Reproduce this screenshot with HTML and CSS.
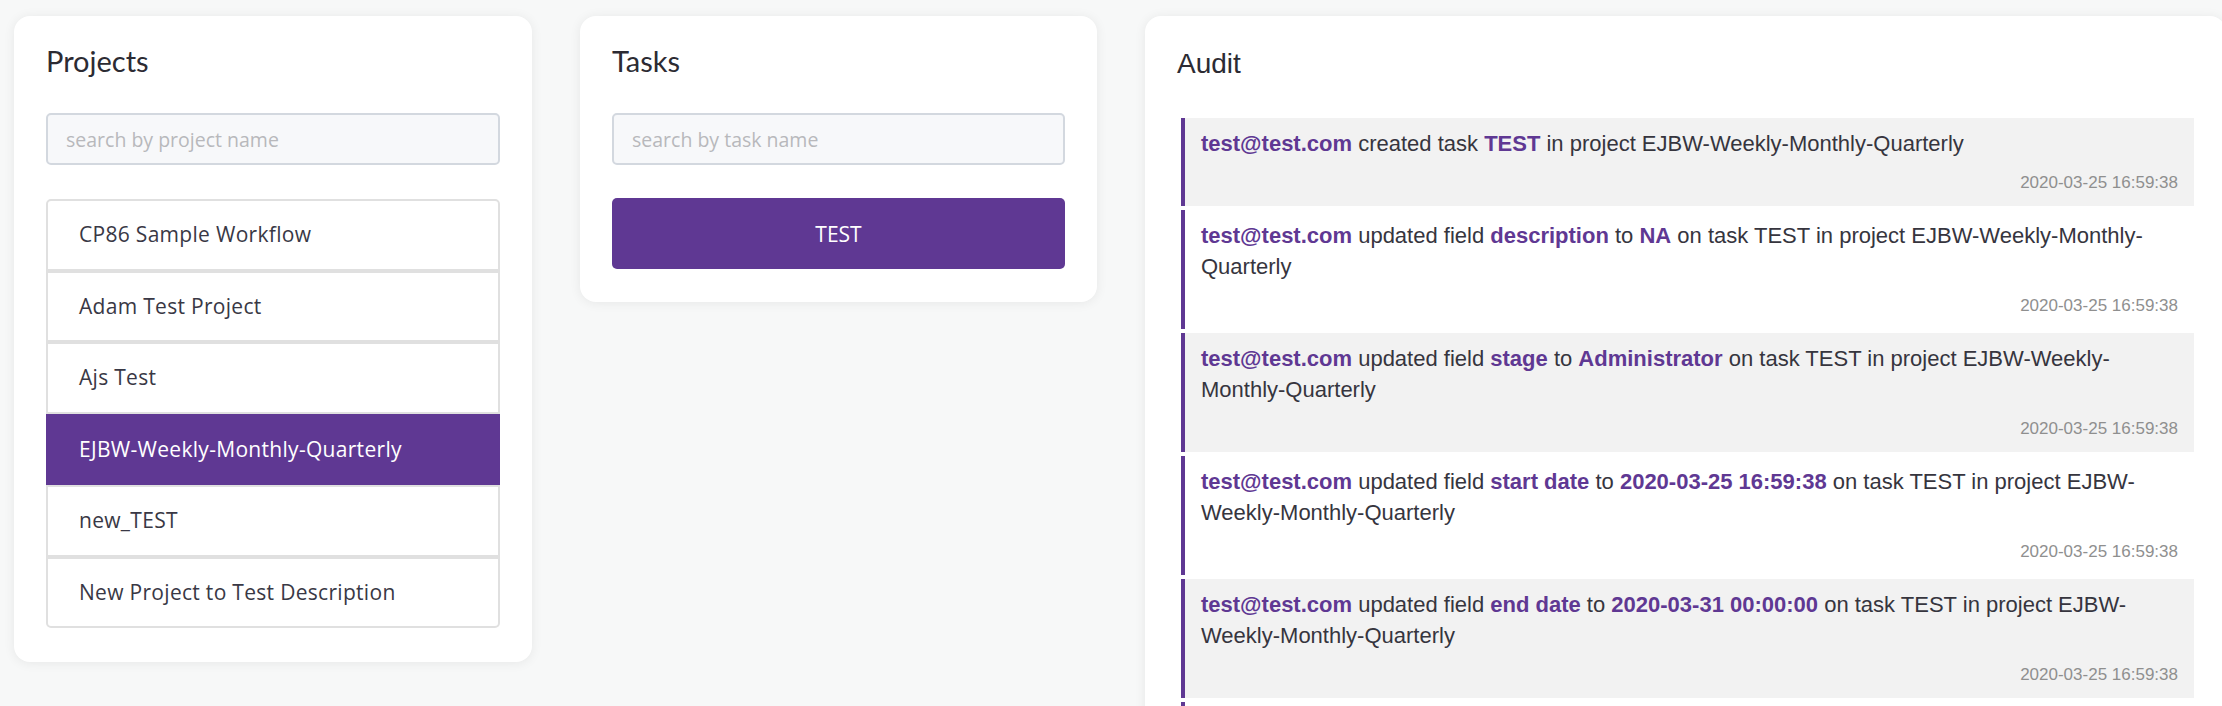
FILE: index.html
```html
<!DOCTYPE html>
<html lang="en">
<head>
<meta charset="utf-8">
<title>Projects</title>
<link rel="stylesheet" href="styles.css">
</head>
<body>
<div class="page">
  <section class="card projects">
    <h2 class="card-title">Projects</h2>
    <input class="search" type="text" placeholder="search by project name">
    <ul class="list">
      <li class="list-item">CP86 Sample Workflow</li>
      <li class="list-item">Adam Test Project</li>
      <li class="list-item">Ajs Test</li>
      <li class="list-item active">EJBW-Weekly-Monthly-Quarterly</li>
      <li class="list-item">new_TEST</li>
      <li class="list-item">New Project to Test Description</li>
    </ul>
  </section>

  <section class="card tasks">
    <h2 class="card-title">Tasks</h2>
    <input class="search" type="text" placeholder="search by task name">
    <button class="task-btn" type="button">TEST</button>
  </section>

  <section class="card audit">
    <h2 class="card-title audit-title">Audit</h2>
    <div class="entries">
      <div class="entry">
        <p class="msg"><b>test@test.com</b> created task <b>TEST</b> in project EJBW-Weekly-Monthly-Quarterly</p>
        <div class="time">2020-03-25 16:59:38</div>
      </div>
      <div class="entry">
        <p class="msg"><b>test@test.com</b> updated field <b>description</b> to <b>NA</b> on task TEST in project EJBW-Weekly-Monthly-Quarterly</p>
        <div class="time">2020-03-25 16:59:38</div>
      </div>
      <div class="entry">
        <p class="msg"><b>test@test.com</b> updated field <b>stage</b> to <b>Administrator</b> on task TEST in project EJBW-Weekly-Monthly-Quarterly</p>
        <div class="time">2020-03-25 16:59:38</div>
      </div>
      <div class="entry">
        <p class="msg"><b>test@test.com</b> updated field <b>start date</b> to <b>2020-03-25 16:59:38</b> on task TEST in project EJBW-Weekly-Monthly-Quarterly</p>
        <div class="time">2020-03-25 16:59:38</div>
      </div>
      <div class="entry">
        <p class="msg"><b>test@test.com</b> updated field <b>end date</b> to <b>2020-03-31 00:00:00</b> on task TEST in project EJBW-Weekly-Monthly-Quarterly</p>
        <div class="time">2020-03-25 16:59:38</div>
      </div>
      <div class="entry entry-more"></div>
    </div>
  </section>
</div>
</body>
</html>
```

FILE: styles.css
```css
html, body {
  margin: 0;
  padding: 0;
  overflow: hidden;
  background: #f7f8f8;
}

body {
  font-family: "Open Sans", Lato, sans-serif;
  color: #383744;
}

.page {
  display: flex;
  align-items: flex-start;
  gap: 48px;
  padding: 16px 0 0 14px;
}

.card {
  flex-shrink: 0;
  box-sizing: border-box;
  background: #ffffff;
  border-radius: 16px;
  box-shadow: 0 1px 12px rgba(0, 0, 0, 0.07);
  padding: 28px 32px 34px;
}

.projects { width: 518px; }
.tasks { width: 517px; padding-bottom: 33px; }
.audit { width: 1081px; }

.card-title {
  margin: 0 0 35px;
  font-family: Lato, sans-serif;
  font-weight: 400;
  font-size: 29px;
  line-height: 34px;
  color: #2c2b33;
}

.audit-title {
  font-family: "Liberation Sans", Arial, sans-serif;
  font-size: 28px;
  margin-top: 3px;
  margin-bottom: 37px;
}

.search {
  display: block;
  box-sizing: border-box;
  width: 100%;
  height: 52px;
  margin: 0;
  padding: 0 18px;
  border: 2px solid #d3d8df;
  border-radius: 5px;
  background: #f7f8fa;
  font-family: "Open Sans", sans-serif;
  font-size: 19.5px;
  color: #383744;
  outline: none;
}

.search::placeholder {
  color: #b8b8bc;
}

.list {
  list-style: none;
  margin: 34px 0 0;
  padding: 0;
}

.list-item {
  border: 2px solid #e0e0e0;
  padding: 20px 31px;
  font-family: "Open Sans", sans-serif;
  font-size: 21px;
  letter-spacing: 0.3px;
  line-height: 27.5px;
  color: #393845;
}

.list-item:first-child {
  border-radius: 5px 5px 0 0;
}

.list-item:last-child {
  border-radius: 0 0 5px 5px;
}

.list-item.active {
  background: #5f3893;
  border-color: #5f3893;
  color: #ffffff;
}

.task-btn {
  display: block;
  width: 100%;
  height: 71px;
  margin: 33px 0 0;
  border: 0;
  border-radius: 5px;
  background: #5f3893;
  color: #ffffff;
  font-family: "Open Sans", sans-serif;
  font-size: 21px;
}

.entries {
  margin-left: 4px;
}

.entry {
  border-left: 4px solid #5f3893;
  padding: 10px 16px 12px;
  margin-bottom: 4px;
  font-family: "Liberation Sans", Arial, sans-serif;
}

.entry:nth-child(odd) {
  background: #f2f2f2;
}

.entry-more {
  height: 88px;
  box-sizing: border-box;
}

.msg {
  margin: 0;
  font-size: 22px;
  line-height: 31px;
  color: #36353e;
}

.msg b {
  color: #5f3893;
}

.time {
  margin-top: 13px;
  text-align: right;
  font-size: 17px;
  line-height: 22px;
  color: #8f8f8f;
}
```
